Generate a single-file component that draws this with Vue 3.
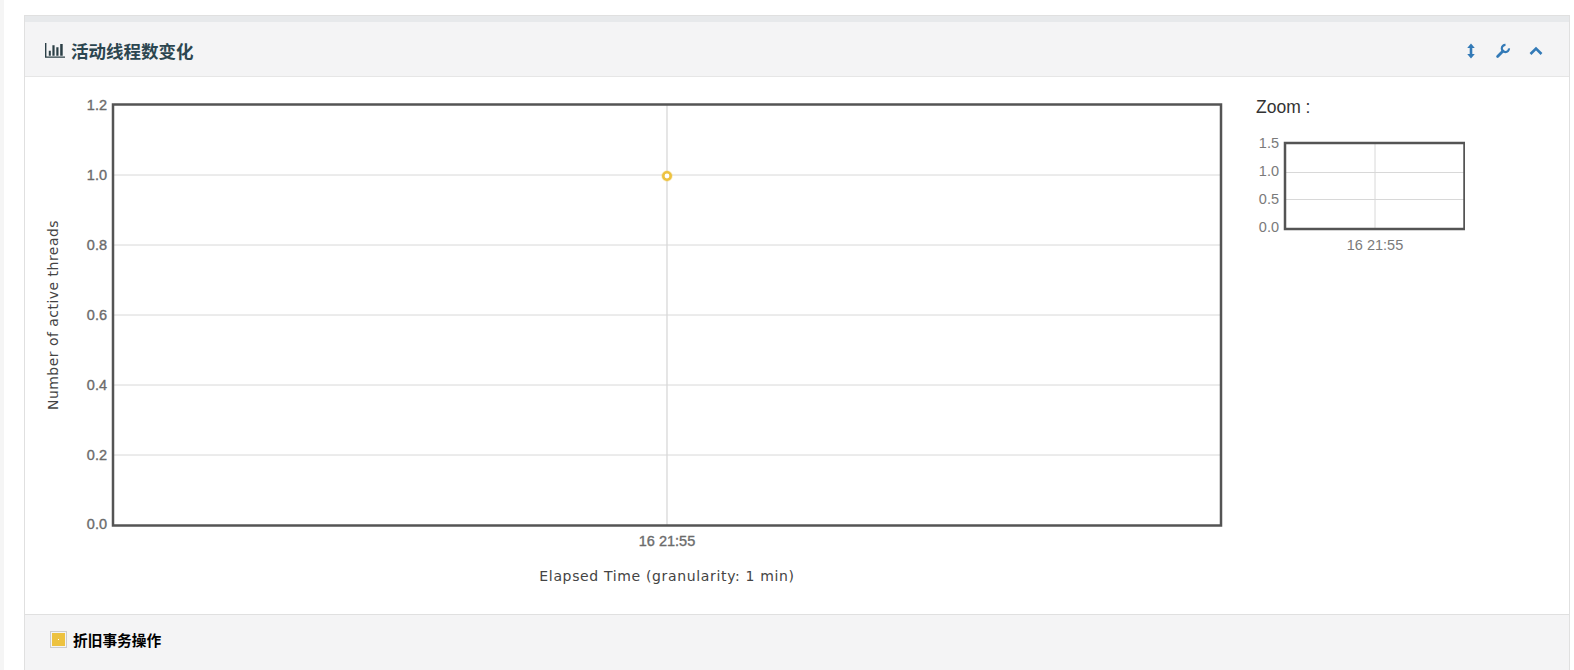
<script setup>
const yTicks = [
  { label: '1.2', y: 0, line: 0 },
  { label: '1.0', y: 70, line: 70.5 },
  { label: '0.8', y: 140, line: 140.5 },
  { label: '0.6', y: 210, line: 210.5 },
  { label: '0.4', y: 280, line: 280.5 },
  { label: '0.2', y: 350, line: 350.5 },
  { label: '0.0', y: 419, line: 421 }
]
const zoomTicks = [
  { label: '1.5', y: 148, line: 143 },
  { label: '1.0', y: 176, line: 172.5 },
  { label: '0.5', y: 204, line: 199.5 },
  { label: '0.0', y: 232, line: 229 }
]
</script>

<template>
  <div class="page">
    <div class="panel">
      <div class="heading">
        <div class="title">
          <svg class="bars" width="20" height="16" viewBox="0 0 20 16">
            <path d="M0 0h1.4v13.5H20v1.2H0z" fill="#2b3f46" />
            <path d="M3.8 7.7h2v5h-2zM7.4 2.3h2.2v10.4H7.4zM11.3 4.3h2.2v8.4h-2.2zM15.2 1h2.5v11.7h-2.5z" fill="#2b3f46" />
          </svg>
          <span>活动线程数变化</span>
        </div>
        <div class="tools">
          <svg width="10" height="16" viewBox="0 0 10 16">
            <path d="M5 .5 8.8 5H6.3v6h2.5L5 15.5 1.2 11h2.5V5H1.2z" fill="#337ab7" />
          </svg>
          <svg width="16" height="16" viewBox="0 0 16 16">
            <path d="M2.6 13.4 8 8" fill="none" stroke="#337ab7" stroke-width="2.8" stroke-linecap="round" />
            <path d="M14 5.4A3.6 3.6 0 1 1 10.5 1.9" fill="none" stroke="#337ab7" stroke-width="2.2" />
          </svg>
          <svg width="14" height="10" viewBox="0 0 14 10">
            <path d="M1.5 8 7 2.6 12.5 8" fill="none" stroke="#337ab7" stroke-width="2.6" />
          </svg>
        </div>
      </div>
      <div class="body">
        <svg class="main-chart" width="1200" height="537" viewBox="0 0 1200 537">
          <g transform="translate(88 27.5)">
            <line v-for="t in yTicks" :key="t.label" x1="0" x2="1108" :y1="t.line" :y2="t.line" stroke="#d8d8d8" />
            <line x1="554" x2="554" y1="0" y2="421" stroke="#d8d8d8" stroke-width="1.3" />
            <circle cx="554" cy="71.5" r="4.6" fill="none" stroke="#edc240" stroke-opacity="0.3" stroke-width="2.4" />
            <circle cx="554" cy="71.5" r="3.7" fill="#fff" stroke="#edc240" stroke-width="2.6" />
            <rect x="0" y="0" width="1108" height="421" fill="none" stroke="#545454" stroke-width="2.5" />
            <text v-for="t in yTicks" :key="t.label" class="tick" x="-6" :y="t.y + 5" text-anchor="end">{{ t.label }}</text>
            <text class="tick" x="554" y="441" text-anchor="middle">16 21:55</text>
            <text class="axis axis-x" x="554" y="476" text-anchor="middle">Elapsed Time (granularity: 1 min)</text>
          </g>
          <text class="axis axis-y" transform="translate(33 238) rotate(-90)" text-anchor="middle">Number of active threads</text>
        </svg>
        <div class="side">
          <div class="zoom-label">Zoom :</div>
          <svg class="zoom-chart" width="240" height="140" viewBox="0 0 240 140">
            <g transform="translate(-1225 -118)">
              <line v-for="t in zoomTicks" :key="t.label" x1="1285" x2="1464" :y1="t.line" :y2="t.line" stroke="#d8d8d8" />
              <line x1="1375" x2="1375" y1="143" y2="229" stroke="#d8d8d8" />
              <rect x="1285" y="143" width="179.5" height="86" fill="none" stroke="#545454" stroke-width="2.5" />
              <text v-for="t in zoomTicks" :key="t.label" class="tick-thin" x="1279" :y="t.y" text-anchor="end">{{ t.label }}</text>
              <text class="tick-thin" x="1375" y="250" text-anchor="middle">16 21:55</text>
            </g>
          </svg>
        </div>
      </div>
      <div class="footer">
        <span class="swatch"><i></i></span>
        <span class="legend">折旧事务操作</span>
      </div>
    </div>
  </div>
</template>

<style>
html, body { margin: 0; background: #fff; overflow: hidden; }
</style>

<style scoped>
.page {
  box-sizing: border-box;
  width: 1574px;
  height: 670px;
  padding: 15px 4px 0 20px;
  background: #fff;
  border-left: 4px solid #f5f5f5;
  overflow: hidden;
}
.panel {
  border: 1px solid #e0e0e0;
  border-bottom: 0;
  height: 700px;
  box-sizing: border-box;
}
.heading {
  box-sizing: border-box;
  height: 61px;
  border-top: 6px solid #e7e9eb;
  border-bottom: 1px solid #e6e6e6;
  background: #f4f4f5;
  display: flex;
  align-items: center;
  justify-content: space-between;
  padding: 3px 26px 0 20px;
}
.title {
  display: flex;
  align-items: center;
  gap: 6px;
  color: #2c4650;
  font: 700 17.5px "Noto Sans CJK SC", "Liberation Sans", sans-serif;
}
.bars { flex: none; }
.tools {
  display: flex;
  align-items: center;
  gap: 18.5px;
}
.body {
  display: flex;
  height: 537px;
  background: #fff;
}
.main-chart { display: block; flex: none; }
.side { width: 340px; }
.zoom-label {
  margin: 20px 0 0 31px;
  height: 21px;
  color: #333;
  font: 17.5px/21px "Liberation Sans", Arial, sans-serif;
}
.zoom-chart { display: block; }
.tick {
  font: 14.5px "Liberation Sans", Arial, sans-serif;
  fill: #6b6b6b;
  stroke: #6b6b6b;
  stroke-width: 0.35px;
}
.tick-thin { font: 14.5px "Liberation Sans", Arial, sans-serif; fill: #7a7a7a; }
.axis { font: 14px "DejaVu Sans", sans-serif; fill: #444; }
.axis-x { letter-spacing: 0.65px; }
.axis-y { letter-spacing: 0.47px; }
.footer {
  height: 60px;
  border-top: 1px solid #e0e0e0;
  background: #f4f4f5;
  display: flex;
  align-items: center;
  box-sizing: border-box;
  padding: 16px 0 27px 25px;
  gap: 6px;
}
.swatch {
  box-sizing: border-box;
  width: 17px;
  height: 17px;
  border: 1px solid #ccc;
  padding: 1px;
  display: block;
  flex: none;
}
.swatch i {
  display: flex;
  align-items: center;
  justify-content: center;
  width: 100%;
  height: 100%;
  background: #edc240;
}
.swatch i::after {
  content: "";
  width: 1px;
  height: 1px;
  background: #fff;
}
.legend { font: 700 14.7px/17px "Noto Sans CJK SC", sans-serif; color: #000; }
</style>
